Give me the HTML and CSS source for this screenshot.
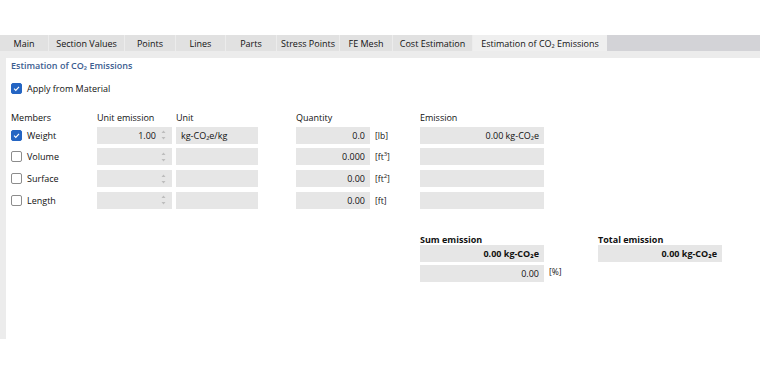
FILE: index.html
```html
<!DOCTYPE html>
<html lang="en">
<head>
    <meta charset="UTF-8">
    <title>Estimation of CO2 Emissions</title>
    <link rel="stylesheet" href="styles.css">
</head>
<body>
    <div class="window">
        <div class="tabs">
            <div class="tab w-main">Main</div>
            <div class="tab w-section">Section Values</div>
            <div class="tab w-points">Points</div>
            <div class="tab w-lines">Lines</div>
            <div class="tab w-parts">Parts</div>
            <div class="tab w-stress">Stress Points</div>
            <div class="tab w-mesh">FE Mesh</div>
            <div class="tab w-cost">Cost Estimation</div>
            <div class="tab active w-co2">Estimation of CO₂ Emissions</div>
            <div class="tab-rest"></div>
        </div>

        <div class="frame">
            <div class="panel">
                <div class="title">Estimation of CO₂ Emissions</div>

                <label class="check-row apply">
                    <span class="box checked"><svg viewBox="0 0 10 10"><path d="M2.3 5.2 L4.2 7 L7.8 3.2" /></svg></span>
                    Apply from Material
                </label>

                <div class="grid">
                    <div class="head">Members</div>
                    <div class="head">Unit emission</div>
                    <div class="head">Unit</div>
                    <div class="head">Quantity</div>
                    <div class="head"></div>
                    <div class="head">Emission</div>

                    <!-- weight -->
                    <label class="check-row"><span class="box checked"><svg viewBox="0 0 10 10"><path d="M2.3 5.2 L4.2 7 L7.8 3.2" /></svg></span>Weight</label>
                    <div class="field spin w-ue"><span class="val">1.00</span><svg class="arrows" viewBox="0 0 5 12"><path d="M0.5 4 L2.5 1.5 L4.5 4 Z M0.5 8 L2.5 10.5 L4.5 8 Z" /></svg></div>
                    <div class="field left w-unit">kg-CO₂e/kg</div>
                    <div class="field w-qty">0.0</div>
                    <div class="dim">[lb]</div>
                    <div class="field w-em">0.00 kg-CO₂e</div>

                    <!-- volume -->
                    <label class="check-row"><span class="box"></span>Volume</label>
                    <div class="field spin w-ue"><span class="val"></span><svg class="arrows" viewBox="0 0 5 12"><path d="M0.5 4 L2.5 1.5 L4.5 4 Z M0.5 8 L2.5 10.5 L4.5 8 Z" /></svg></div>
                    <div class="field left w-unit"></div>
                    <div class="field w-qty">0.000</div>
                    <div class="dim">[ft<sup>3</sup>]</div>
                    <div class="field w-em"></div>

                    <!-- surface -->
                    <label class="check-row"><span class="box"></span>Surface</label>
                    <div class="field spin w-ue"><span class="val"></span><svg class="arrows" viewBox="0 0 5 12"><path d="M0.5 4 L2.5 1.5 L4.5 4 Z M0.5 8 L2.5 10.5 L4.5 8 Z" /></svg></div>
                    <div class="field left w-unit"></div>
                    <div class="field w-qty">0.00</div>
                    <div class="dim">[ft<sup>2</sup>]</div>
                    <div class="field w-em"></div>

                    <!-- length -->
                    <label class="check-row"><span class="box"></span>Length</label>
                    <div class="field spin w-ue"><span class="val"></span><svg class="arrows" viewBox="0 0 5 12"><path d="M0.5 4 L2.5 1.5 L4.5 4 Z M0.5 8 L2.5 10.5 L4.5 8 Z" /></svg></div>
                    <div class="field left w-unit"></div>
                    <div class="field w-qty">0.00</div>
                    <div class="dim">[ft]</div>
                    <div class="field w-em"></div>
                </div>

                <div class="totals">
                    <div class="sum">
                        <div class="head bold">Sum emission</div>
                        <div class="field bold w-em">0.00 kg-CO₂e</div>
                        <div class="pct-row">
                            <div class="field w-em">0.00</div>
                            <div class="dim">[%]</div>
                        </div>
                    </div>
                    <div class="total">
                        <div class="head bold">Total emission</div>
                        <div class="field bold w-em">0.00 kg-CO₂e</div>
                    </div>
                </div>
            </div>
        </div>
    </div>
</body>
</html>
```

FILE: styles.css
```css
body {
    margin: 0;
    background: #fff;
    color: #111;
    font-family: "Open Sans", "Noto Sans", sans-serif;
    font-size: 9px;
}

.window {
    margin-top: 35px;
}

/* tab strip */
.tabs {
    display: flex;
    height: 16px;
}

.tab {
    display: flex;
    align-items: center;
    justify-content: center;
    background: #e1e1e1;
    border-right: 1px solid #ececec;
    box-sizing: border-box;
    white-space: nowrap;
}

.tab.active {
    background: #efefef;
    border-right: none;
}

.tab-rest {
    flex: 1;
    background: #d3d3d7;
}

.w-main { width: 49px; }
.w-section { width: 76px; }
.w-points { width: 51px; }
.w-lines { width: 50px; }
.w-parts { width: 51px; }
.w-stress { width: 63px; }
.w-mesh { width: 53px; }
.w-cost { width: 80px; }
.w-co2 { width: 134px; }

/* frame around the page */
.frame {
    background: #ececec;
    padding: 7px 0 0 6px;
}

.panel {
    background: #fff;
    height: 281px;
    padding: 1px 0 0 5px;
    box-sizing: border-box;
}

.title {
    color: #3b5d8f;
    font-weight: 600;
    height: 13px;
    line-height: 13px;
}

.check-row {
    display: flex;
    align-items: center;
    gap: 5px;
}

.apply {
    margin-top: 10px;
    height: 13px;
}

.box {
    width: 9px;
    height: 9px;
    border: 1px solid #8c8c8c;
    border-radius: 2px;
    background: #fff;
    display: inline-block;
    flex: none;
}

.box.checked {
    background: #2465c3;
    border-color: #2465c3;
}

.box svg {
    display: block;
    width: 9px;
    height: 9px;
}

.box path {
    fill: none;
    stroke: #fff;
    stroke-width: 1.3;
}

/* member table */
.grid {
    display: grid;
    grid-template-columns: 86px 79px 120px 74px 50px 124px;
    grid-template-rows: 12px repeat(4, 17px);
    row-gap: 4.7px;
    margin-top: 15px;
    align-items: center;
}

.grid .head {
    align-self: end;
    line-height: 9px;
}

.field {
    background: #e6e6e6;
    height: 17px;
    box-sizing: border-box;
    padding: 0 5px;
    display: flex;
    align-items: center;
    justify-content: flex-end;
    white-space: nowrap;
}

.field.left {
    justify-content: flex-start;
}

.w-ue { width: 75px; }
.w-unit { width: 82px; }
.w-qty { width: 74px; }
.w-em { width: 124px; }

.spin {
    padding-right: 6px;
}

.arrows {
    width: 5px;
    height: 12px;
    margin-left: 5px;
    flex: none;
}

.arrows path {
    fill: #bdbdbd;
}

.dim {
    padding-left: 5px;
    font-size: 8.5px;
}

.dim sup {
    font-size: 6px;
    line-height: 0;
}

/* totals */
.totals {
    display: flex;
    margin-top: 24px;
    padding-left: 409px;
}

.sum {
    width: 178px;
}

.totals .head {
    height: 13px;
    line-height: 13px;
    margin-bottom: -4px;
}

.bold {
    font-weight: 700;
}

.totals .field {
    margin-top: 3px;
}

.pct-row {
    display: flex;
    align-items: center;
}
```
